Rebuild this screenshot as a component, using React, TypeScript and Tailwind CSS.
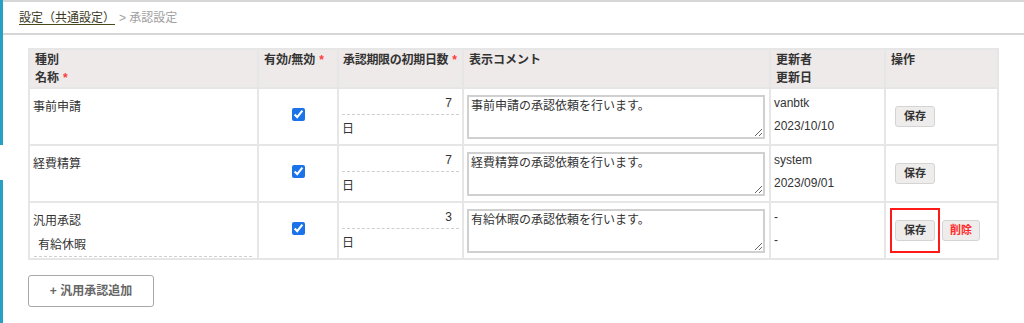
import React from 'react';

type Row = {
  kind: string;
  name?: string;
  days: number;
  comment: string;
  user: string;
  date: string;
  removable?: boolean;
};

const rows: Row[] = [
  { kind: '事前申請', days: 7, comment: '事前申請の承認依頼を行います。', user: 'vanbtk', date: '2023/10/10' },
  { kind: '経費精算', days: 7, comment: '経費精算の承認依頼を行います。', user: 'system', date: '2023/09/01' },
  { kind: '汎用承認', name: '有給休暇', days: 3, comment: '有給休暇の承認依頼を行います。', user: '-', date: '-', removable: true },
];

const font = { fontFamily: '"Liberation Sans", "Noto Sans CJK JP", sans-serif' };

function Req() {
  return <span className="text-[#ff3b3b] ml-1">*</span>;
}

export default function App() {
  return (
    <div className="relative w-[1024px] h-[323px] bg-white text-[12px] text-[#333] overflow-hidden" style={font}>
      {/* left accent */}
      <div className="absolute left-0 top-0 w-[3px] h-[145px] bg-[#2a9fc4]" />
      <div className="absolute left-0 top-[180px] w-[3px] h-[143px] bg-[#2a9fc4]" />

      <div className="ml-[3px] border-t-2 border-[#d6d6d6] h-[35px] border-b-2 flex items-center pl-[16px] gap-[4px]">
        <span className="underline underline-offset-2 decoration-[#4a4a1a] text-[#3a3a22]">設定（共通設定）</span>
        <span className="text-[#a0a0a0]">&gt; 承認設定</span>
      </div>

      <div className="pl-[28px] pt-[13px]">
        <table className="border-collapse table-fixed w-[969px]">
          <colgroup>
            <col className="w-[229px]" />
            <col className="w-[80px]" />
            <col className="w-[125px]" />
            <col className="w-[307px]" />
            <col className="w-[115px]" />
            <col className="w-[113px]" />
          </colgroup>
          <thead>
            <tr className="bg-[#eeeae9] h-[39px] font-bold text-[#333] align-top leading-[18px] whitespace-nowrap">
              <th className="border-2 border-[#e6e6e6] text-left px-[5px] pt-[1px]">
                種別
                <br />
                名称<Req />
              </th>
              <th className="border-2 border-[#e6e6e6] text-left px-[5px] pt-[1px]">
                有効/無効<Req />
              </th>
              <th className="border-2 border-[#e6e6e6] text-left px-[4px] pt-[1px] tracking-[-0.3px]">
                承認期限の初期日数<Req />
              </th>
              <th className="border-2 border-[#e6e6e6] text-left px-[5px] pt-[1px]">表示コメント</th>
              <th className="border-2 border-[#e6e6e6] text-left px-[5px] pt-[1px]">
                更新者
                <br />
                更新日
              </th>
              <th className="border-2 border-[#e6e6e6] text-left px-[5px] pt-[1px]">操作</th>
            </tr>
          </thead>
          <tbody>
            {rows.map((r, i) => (
              <tr key={i} className="h-[57px]">
                <td className="border-2 border-[#e6e6e6] align-top px-[3px] pt-[9px]">
                  <div className="leading-[18px]">{r.kind}</div>
                  {r.name && (
                    <div className="mt-[6px] ml-[1px] mr-[2px] pl-[4px] pb-[2px] leading-[18px] border-b border-dashed border-[#cfcfcf]">
                      {r.name}
                    </div>
                  )}
                </td>
                <td className="border-2 border-[#e6e6e6] text-center align-middle pb-[6px]">
                  <input type="checkbox" defaultChecked className="w-[13px] h-[13px] accent-[#1a73e8] align-middle" />
                </td>
                <td className="border-2 border-[#e6e6e6] align-top px-[3px] pt-[5px]">
                  <div className="h-[21px] text-right pr-[7px] leading-[18px] border-b border-dashed border-[#cfcfcf]">
                    {r.days}
                  </div>
                  <div className="leading-[18px] mt-[5px]">日</div>
                </td>
                <td className="border-2 border-[#e6e6e6] align-middle px-[3px]">
                  <textarea
                    defaultValue={r.comment}
                    className="block w-[298px] h-[44px] border-2 border-[#d0d0d0] px-[2px] py-[1px] text-[12px] leading-[16px] text-[#333] outline-none"
                    style={font}
                  />
                </td>
                <td className="border-2 border-[#e6e6e6] align-top px-[3px] pt-[5px] leading-[18px]">
                  <div>{r.user}</div>
                  <div className="mt-[5px]">{r.date}</div>
                </td>
                <td className="border-2 border-[#e6e6e6] align-middle pl-[4px]">
                  <div className="flex items-center gap-[2px]">
                    <div className={r.removable ? 'border-2 border-[#ff1a1a] px-[3px] py-[10px] -my-[8px]' : 'ml-[5px]'}>
                      <button className="w-[40px] h-[21px] bg-[#efedec] border border-[#d4d4d4] rounded-[3px] text-[11px] font-bold text-[#333]">
                        保存
                      </button>
                    </div>
                    {r.removable && (
                      <button className="w-[38px] h-[21px] bg-[#efedec] border border-[#d4d4d4] rounded-[3px] text-[11px] font-bold text-[#ff2a2a]">
                        削除
                      </button>
                    )}
                  </div>
                </td>
              </tr>
            ))}
          </tbody>
        </table>

        <button className="mt-[15px] w-[126px] h-[32px] bg-white border border-[#a8a8a8] rounded-[3px] text-[12px] font-bold text-[#666]">
          + 汎用承認追加
        </button>
      </div>
    </div>
  );
}
